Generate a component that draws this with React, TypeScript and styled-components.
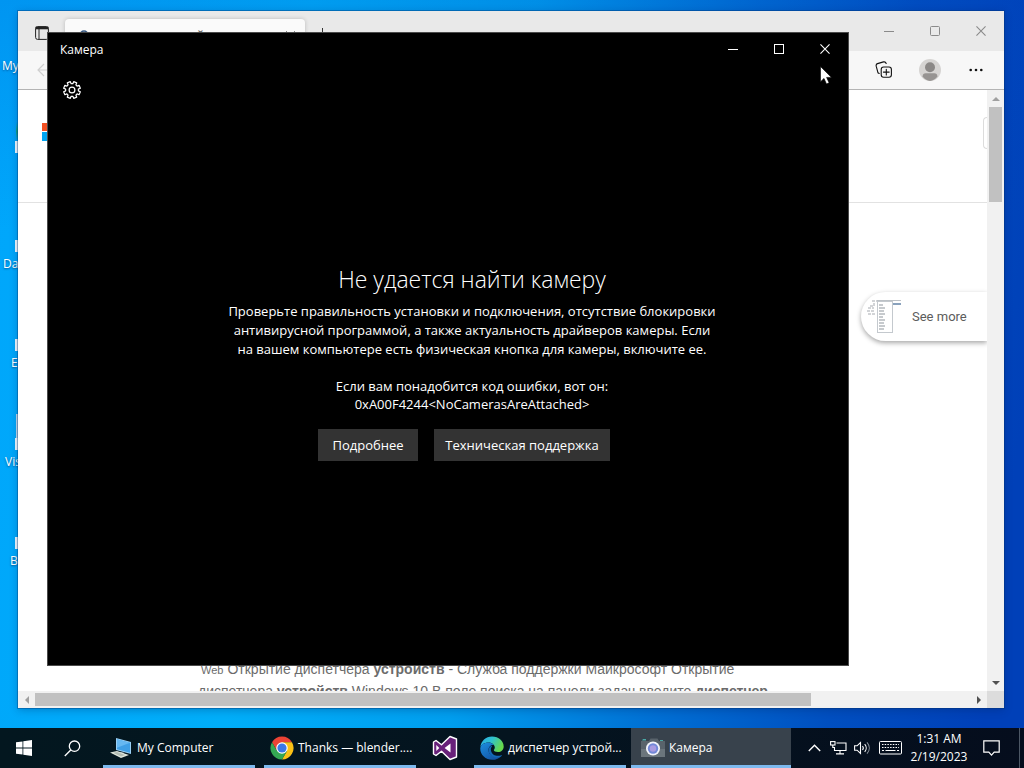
import React from "react";
import styled, { createGlobalStyle } from "styled-components";

const GlobalStyle = createGlobalStyle`
  * { box-sizing: border-box; }
  html, body { margin: 0; padding: 0; }
  body { font-family: "Open Sans", "Noto Sans", sans-serif; font-size: 12px; }
  button { font: inherit; color: inherit; border: 0; padding: 0; background: none; }
`;

/* ---------- desktop ---------- */

const Desktop = styled.div`
  min-height: 100vh;
  display: flex;
  flex-direction: column;
  overflow: hidden;
  background:
    linear-gradient(180deg, rgba(0, 60, 190, 0.16), rgba(0, 100, 220, 0) 30%),
    linear-gradient(97deg, #00a6fb 0%, #00aef9 28%, #009eee 48%, #006cd2 68%, #004fc0 82%, #0040b8 96%);
`;

const Workspace = styled.main`
  flex: 1;
  position: relative;
  display: flex;
`;

const Shortcuts = styled.ul`
  list-style: none;
  margin: 0;
  padding: 18px 0 0;
`;

const Shortcut = styled.li`
  height: 99px;
  display: flex;
  flex-direction: column;
`;

const ShortcutArt = styled.span<{ $color: string }>`
  width: 12px;
  height: 24px;
  margin-left: 16px;
  background: ${(p) => p.$color};
`;

const ShortcutBadge = styled.span<{ $shown: boolean }>`
  width: 12px;
  height: 12px;
  margin-left: 15px;
  margin-bottom: 4px;
  background: ${(p) => (p.$shown ? "#f4fbff" : "transparent")};
`;

const ShortcutLabel = styled.span<{ $indent: number }>`
  padding-left: ${(p) => p.$indent}px;
  line-height: 16px;
  color: #fff;
  text-shadow: 0 1px 2px rgba(0, 40, 90, 0.6);
`;

/* ---------- shared window parts ---------- */

const WindowButtons = styled.div`
  display: flex;
  margin-left: auto;
`;

const WindowButton = styled.button<{ $height: number }>`
  width: 46px;
  height: ${(p) => p.$height}px;
  display: flex;
  align-items: center;
  justify-content: center;
`;

/* ---------- browser ---------- */

const BrowserWindow = styled.section`
  position: absolute;
  inset: 11px 20px 20px 18px;
  display: flex;
  flex-direction: column;
  background: #fff;
  overflow: hidden;
  box-shadow: 0 0 0 1px rgba(0, 50, 110, 0.35), 0 2px 8px rgba(0, 30, 90, 0.3);
`;

const TabStrip = styled.header`
  height: 40px;
  display: flex;
  background: #e9e9e9;
  color: #8a8a8a;
`;

const TabMenu = styled.button`
  width: 47px;
  height: 40px;
  padding-top: 8px;
  color: #222;
`;

const Tab = styled.div`
  width: 240px;
  height: 32px;
  margin-top: 8px;
  padding: 0 10px 0 14px;
  display: flex;
  align-items: center;
  gap: 10px;
  border-radius: 4px 4px 0 0;
  background: #fafafa;
  color: #333;
  box-shadow: 0 0 4px rgba(0, 0, 0, 0.2);
  white-space: nowrap;
`;

const TabTitle = styled.span`
  flex: 1;
  overflow: hidden;
`;

const NewTab = styled.button`
  width: 34px;
  height: 32px;
  margin-top: 8px;
  color: #333;
`;

const AddressRow = styled.div`
  height: 39px;
  display: flex;
  align-items: center;
  padding-left: 18px;
  background: #f7f7f7;
  border-bottom: 1px solid #b4b4b4;
  color: #111;
`;

const ToolbarButton = styled.button`
  width: 46px;
  height: 38px;
  display: flex;
  align-items: center;
  justify-content: center;
`;

const ToolbarEnd = styled.div`
  display: flex;
  margin-left: auto;
  padding-right: 5px;
`;

const Viewport = styled.div`
  flex: 1;
  min-height: 0;
  display: flex;
`;

const Page = styled.div`
  flex: 1;
  min-width: 0;
  display: flex;
  flex-direction: column;
`;

const PageHeader = styled.div`
  height: 113px;
  display: flex;
  justify-content: space-between;
  padding: 27px 0 0 24px;
  border-bottom: 1px solid #e2e2e2;
`;

const MenuEdge = styled.span`
  width: 4px;
  height: 32px;
  border: 1px solid #dcdcdc;
  border-right: 0;
  border-radius: 4px 0 0 4px;
`;

const LogoBox = styled.span`
  padding-top: 6px;
`;

const Results = styled.div`
  flex: 1;
  min-height: 0;
  display: flex;
  flex-direction: column;
  justify-content: space-between;
  padding-top: 89px;
`;

const SeeMore = styled.a`
  align-self: flex-end;
  width: 126px;
  height: 49px;
  display: flex;
  align-items: center;
  gap: 10px;
  padding-left: 5px;
  border-radius: 25px 0 0 25px;
  background: #fff;
  box-shadow: 0 2px 5px rgba(0, 0, 0, 0.35);
  clip-path: inset(-8px 0 -10px -8px);
  color: #5c5c5c;
  font-family: Roboto, sans-serif;
  font-size: 13px;
  text-decoration: none;
`;

const Snippet = styled.p`
  margin: 0 0 0 180px;
  height: 32px;
  overflow: hidden;
  color: #6b6b6b;
  font-family: "Liberation Sans", sans-serif;
  font-size: 14px;
  line-height: 21px;
  white-space: nowrap;
`;

const SnippetTag = styled.span`
  padding: 0 4px 0 3px;
  font-size: 11px;
`;

const VerticalBar = styled.div`
  width: 17px;
  display: flex;
  flex-direction: column;
  align-items: center;
  background: #f1f1f1;
`;

const VerticalThumb = styled.div`
  width: 13px;
  height: 95px;
  background: #c1c1c1;
`;

const ScrollArrow = styled.button<{ $color: string }>`
  width: 17px;
  height: 17px;
  display: flex;
  align-items: center;
  justify-content: center;
  color: ${(p) => p.$color};
`;

const HorizontalBar = styled.div`
  height: 17px;
  display: flex;
  align-items: center;
  background: #f1f1f1;
`;

const HorizontalTrack = styled.div`
  flex: 1;
`;

const HorizontalThumb = styled.div`
  width: 83%;
  height: 13px;
  background: #c1c1c1;
`;

const ScrollCorner = styled.div`
  width: 17px;
  height: 17px;
  background: #dcdcdc;
`;

const PushDown = styled.div`
  margin-top: auto;
`;

/* ---------- camera ---------- */

const CameraWindow = styled.section`
  position: absolute;
  inset: 32px 175px 62px 47px;
  display: flex;
  flex-direction: column;
  border: 1px solid #4a4a4a;
  background: #000;
  color: #fff;
`;

const CameraTitleBar = styled.header`
  height: 32px;
  display: flex;
  padding-left: 12px;
  line-height: 34px;
`;

const CameraBody = styled.div`
  flex: 1;
  display: flex;
`;

const CameraRail = styled.nav`
  width: 48px;
`;

const RailButton = styled.button`
  width: 48px;
  height: 50px;
  display: flex;
  align-items: center;
  justify-content: center;
`;

const Message = styled.div`
  flex: 1;
  display: flex;
  flex-direction: column;
  align-items: center;
  justify-content: center;
  padding-bottom: 6px;
  text-align: center;
  font-size: 13px;
`;

const MessageTitle = styled.h1`
  margin: 0 0 7px;
  font-size: 23px;
  line-height: 32px;
  font-weight: 350;
`;

const MessageText = styled.p`
  margin: 0 0 18px;
  line-height: 19px;
`;

const ErrorText = styled.p`
  margin: 0 0 16px;
  line-height: 18px;
`;

const Actions = styled.div`
  display: flex;
`;

const ActionButton = styled.button<{ $width: number }>`
  width: ${(p) => p.$width}px;
  height: 32px;
  margin-right: 16px;
  background: #333;
  white-space: nowrap;
`;

const Pointer = styled.svg`
  position: absolute;
  top: 66px;
  right: 192px;
`;

/* ---------- taskbar ---------- */

const Taskbar = styled.footer`
  height: 40px;
  display: flex;
  background: linear-gradient(90deg, #03171f, #04141f 50%, #050d1d);
  color: #fff;
`;

const TaskIconButton = styled.button`
  width: 48px;
  height: 40px;
  display: flex;
  align-items: center;
  justify-content: center;
`;

const Tasks = styled.div`
  display: flex;
  gap: 1px;
  padding-left: 3px;
`;

const Task = styled.button<{ $active?: boolean }>`
  width: 160px;
  height: 40px;
  display: flex;
  flex-direction: column;
  padding: 0 ${(p) => (p.$active ? 0 : 4)}px;
  background: ${(p) => (p.$active ? "#38424c" : "transparent")};
`;

const TaskContent = styled.span<{ $active?: boolean }>`
  flex: 1;
  width: 100%;
  display: flex;
  align-items: center;
  gap: 4px;
  padding: 2px 0 0 ${(p) => (p.$active ? 10 : 6)}px;
  border-bottom: 3px solid #7db9ee;
  white-space: nowrap;
`;

const Tray = styled.div`
  display: flex;
  align-items: center;
  margin-left: auto;
  padding-right: 4px;
`;

const TrayButton = styled.button<{ $width: number }>`
  width: ${(p) => p.$width}px;
  height: 40px;
  display: flex;
  align-items: center;
  justify-content: center;
`;

const Clock = styled.button`
  width: 66px;
  height: 40px;
  line-height: 18px;
  text-align: center;
`;

const ShowDesktop = styled.span`
  width: 1px;
  height: 40px;
  margin-left: 8px;
  background: #4c5765;
`;

/* ---------- icons ---------- */

const MinimizeIcon = () => (
  <svg width="10" height="10" stroke="currentColor"><path d="M0 5.5h10" /></svg>
);
const MaximizeIcon = ({ radius = 0 }: { radius?: number }) => (
  <svg width="10" height="10" fill="none" stroke="currentColor">
    <rect x="0.5" y="0.5" width="9" height="9" rx={radius} />
  </svg>
);
const CloseIcon = ({ size = 10 }: { size?: number }) => (
  <svg width={size} height={size} viewBox="0 0 11 11" stroke="currentColor" strokeWidth="1.2"><path d="M.5.5l10 10M10.5.5l-10 10" /></svg>
);

const gearPath = (() => {
  const points: string[] = [];
  for (let i = 0; i < 8; i++) {
    const middle = 22.5 + i * 45;
    const corners: [number, number][] = [[-15, 6.4], [-11, 8.5], [11, 8.5], [15, 6.4]];
    corners.forEach(([offset, r]) => {
      const a = ((middle + offset) * Math.PI) / 180;
      points.push(`${(9 + r * Math.cos(a)).toFixed(2)} ${(9 + r * Math.sin(a)).toFixed(2)}`);
    });
  }
  return `M${points.join("L")}Z`;
})();

const GearIcon = () => (
  <svg width="18" height="18" viewBox="0 0 18 18" fill="none" stroke="#fff" strokeWidth="1.2" strokeLinejoin="round">
    <path d={gearPath} />
    <circle cx="9" cy="9" r="2.9" />
  </svg>
);

const TabMenuIcon = () => (
  <svg width="14" height="14" viewBox="0 0 14 14" fill="none" stroke="currentColor">
    <rect x="0.6" y="0.6" width="12.8" height="12.8" rx="2" />
    <path d="M.6 2h12.8" strokeWidth="2.6" />
    <path d="M4 3v10" />
  </svg>
);

const CollectionsIcon = () => (
  <svg width="18" height="18" viewBox="0 0 18 18" fill="none" stroke="currentColor" strokeWidth="1.1" strokeLinecap="round">
    <path d="M4.2 12.4 3 11.8 1.2 5.2C.9 3.8 1.2 3 2.5 2.6l6-1.7c1.4-.3 2.2.1 2.7 1.6" />
    <rect x="6.2" y="6" width="10.2" height="10.2" rx="2.4" />
    <path d="M11.3 8.200v5.800M8.400 11.100h5.800" />
  </svg>
);

const AvatarIcon = () => (
  <svg width="22" height="22" viewBox="0 0 22 22">
    <circle cx="11" cy="11" r="11" fill="#d6d4d2" />
    <circle cx="11" cy="8.2" r="5" fill="#8b8886" />
    <path d="M3.6 17.5c0-2 1.2-3.2 3-3.2h8.8c1.8 0 3 1.2 3 3.2A11 11 0 0 1 11 22a11 11 0 0 1-7.4-4.5z" fill="#979492" />
  </svg>
);

const MoreIcon = () => (
  <svg width="14" height="4" fill="currentColor">
    <circle cx="1.7" cy="2" r="1.3" /><circle cx="7" cy="2" r="1.3" /><circle cx="12.3" cy="2" r="1.3" />
  </svg>
);

const PageThumb = () => (
  <svg width="36" height="36" viewBox="0 0 36 36" fill="none" stroke="#8e959c">
    <rect x="11.5" y="2.5" width="15" height="31" stroke="#c4c9ce" />
    <path d="M6 2h5M8 4v3h-5M2 9h6M1 12h7M2 15h7" strokeDasharray="3 1" opacity=".8" />
    <path d="M13 6h4M13 9h6M13 12h5M13 15h6M13 18h4M13 21h6M13 24h5M13 27h6M13 30h5" />
    <path d="M11 1.5h24" stroke="#bcc1c6" />
    <path d="M27 5h8" stroke="#8aa2bd" strokeWidth="2" />
  </svg>
);

const MicrosoftLogo = () => (
  <svg width="19" height="18">
    <path fill="#f25022" d="M0 0h9v8H0z" /><path fill="#7fba00" d="M10 0h9v8h-9z" />
    <path fill="#00a4ef" d="M0 9h9v9H0z" /><path fill="#ffb900" d="M10 9h9v9h-9z" />
  </svg>
);

const Triangle = ({ d }: { d: string }) => (
  <svg width="8" height="8" fill="currentColor"><path d={d} /></svg>
);

const WindowsIcon = () => (
  <svg width="16" height="16" fill="#fff">
    <path d="M0 2.3l6.5-.9v6.2H0zM7.3 1.3L16 0v7.6H7.3zM0 8.4h6.5v6.2L0 13.7zM7.3 8.4H16V16l-8.7-1.3z" />
  </svg>
);

const SearchIcon = () => (
  <svg width="17" height="17" fill="none" stroke="#fff" strokeWidth="1.3">
    <circle cx="10.5" cy="6.2" r="5.2" /><path d="M6.8 10 .8 16" />
  </svg>
);

const ComputerIcon = () => (
  <svg width="24" height="24" viewBox="0 0 24 24">
    <path d="M7 2l15 4v12L7 14z" fill="#9bd0f5" />
    <path d="M8 3.3l13 3.5v10L8 13.2z" fill="#3f9fe6" />
    <path d="M8 3.3l13 3.5-13 5z" fill="#66b8f2" />
    <path d="M12 16l3 .8v2l-5-1z" fill="#8aa0ab" />
    <path d="M1 16.5l7-1.5 12 4-8 3z" fill="#dfe6dc" />
    <path d="M4 16.7l4-.7 8 2.9-4 1.5z" fill="#b3bdb4" />
  </svg>
);

const ChromeIcon = () => (
  <svg width="24" height="24" viewBox="0 0 24 24">
    <path d="M2.04 6.25A11.5 11.5 0 0 1 21.96 6.25H12V12L7.02 14.875Z" fill="#ea4335" />
    <path d="M21.96 6.25A11.5 11.5 0 0 1 12 23.5L16.98 14.875 12 12V6.25Z" fill="#fbc116" />
    <path d="M12 23.5A11.5 11.5 0 0 1 2.04 6.25L7.02 14.875 12 12 16.98 14.875Z" fill="#34a853" />
    <circle cx="12" cy="12" r="5.75" fill="#fff" />
    <circle cx="12" cy="12" r="4.6" fill="#3b78e7" />
  </svg>
);

const VisualStudioIcon = () => (
  <svg width="26" height="26" viewBox="0 0 26 26">
    <path d="M18 1.5L24.5 4v18L18 24.500l-8.500-8.300L4 20.500 1.500 19V7L4 5.500l5.500 4.300z" fill="#68217a" stroke="#fff" strokeWidth="1.400" strokeLinejoin="round" />
    <path d="M18.500 8.500v9L12.600 13zM4.300 10v6l3-3z" fill="#fff" />
  </svg>
);

const EdgeIcon = () => (
  <svg width="24" height="24" viewBox="0 0 24 24">
    <defs>
      <linearGradient id="edgeTop" x1="0" y1="0" x2="1" y2=".4">
        <stop offset="0" stopColor="#28a9e8" /><stop offset=".5" stopColor="#2fc2cf" /><stop offset="1" stopColor="#66d84c" />
      </linearGradient>
      <linearGradient id="edgeLow" x1="0" y1="0" x2=".8" y2="1">
        <stop offset="0" stopColor="#1c8fe0" /><stop offset="1" stopColor="#124f9f" />
      </linearGradient>
    </defs>
    <path d="M.3 11.5C.8 5 5.8.4 12 .4c6.8 0 11.7 4.8 11.7 10 0 3.4-2.5 5.7-5.7 5.7-2.6 0-4.2-1-4.2-2 0-.6 1-1 1-2.7 0-2.3-2.4-5-6.3-5C4.3 6.4.9 8.6.3 11.5z" fill="url(#edgeTop)" />
    <path d="M.3 12C.7 8.6 4 6.4 8.5 6.4c3 0 4.6 1.5 5.2 2.7-2.5-.8-5.2 1.7-5.2 4.9 0 3.7 3.3 6.9 7.9 6.9 2.3 0 4-.7 5.3-1.5-2.2 3-5.7 4.4-9.4 4.4C5.5 23.8-.2 18.5.3 12z" fill="url(#edgeLow)" />
    <path d="M8.6 13.5c-.5 4.2 3 7.9 7.8 7.9 2.4 0 4.2-.8 5.2-1.5.4-.3.3-.8-.2-.7-3.9 1.5-9.2.5-10.4-4.5-.4-1.7.2-3.6 1.4-4.9-2 .2-3.6 1.6-3.8 3.7z" fill="#1469b8" />
  </svg>
);

const CameraAppIcon = () => (
  <svg width="24" height="24" viewBox="0 0 24 24">
    <path d="M1 4.5h4V3H2zM19 4h3v1.5h-3z" fill="#4aa7a5" />
    <path d="M0 5h8l1.5-2.5h7L18 5h6v16H0z" fill="#59636b" />
    <path d="M0 13h24v8H0z" fill="#6b757c" />
    <circle cx="12" cy="12.5" r="7" fill="#f2f4fa" />
    <circle cx="12" cy="12.5" r="5.2" fill="#7388d8" />
    <circle cx="12" cy="12.5" r="3.2" fill="#a99be0" />
  </svg>
);

const ChevronIcon = () => (
  <svg width="13" height="8" fill="none" stroke="#fff" strokeWidth="1.4"><path d="M.8 7l5.7-5.7L12.2 7" /></svg>
);

const NetworkIcon = () => (
  <svg width="17" height="14" fill="none" stroke="#fff" strokeWidth="1.1">
    <path d="M6.5 2H16v7.5H4.5V6M10 9.5V13M6 12.9h8" />
    <rect x=".6" y=".6" width="4.4" height="3.4" /><path d="M2.8 4v2.5H4.5" />
  </svg>
);

const SoundIcon = () => (
  <svg width="17" height="14" fill="none" stroke="#fff" strokeWidth="1.1">
    <path d="M.6 4.8h2.5L6.5 1.5v11L3.1 9.2H.6z" />
    <path d="M8.5 5c1 1.2 1 2.8 0 4M10.7 3.2c2 2.2 2 5.4 0 7.6" />
    <path d="M13 1.3c3 3.4 3 8 0 11.4" stroke="#8a929c" />
  </svg>
);

const KeyboardIcon = () => (
  <svg width="23" height="14" fill="none" stroke="#fff">
    <rect x=".5" y=".5" width="22" height="12.5" rx="1" />
    <path d="M3 3.5h17M3 6.5h17" strokeDasharray="1.5 1.2" />
    <path d="M3 9.5h2M6.5 9.5h10M18 9.5h2" />
  </svg>
);

const NotificationIcon = () => (
  <svg width="17" height="17" fill="none" stroke="#fff" strokeWidth="1.2">
    <path d="M.8.8h15.4v11.4h-5l-2.7 3-2.7-3h-5z" />
  </svg>
);

/* ---------- page ---------- */

const shortcuts = [
  { label: "My", indent: 2, badge: false, art: "transparent" },
  { label: "", indent: 0, badge: true, art: "linear-gradient(transparent 20%, #12a07c 60%, transparent)" },
  { label: "Da", indent: 3, badge: true, art: "transparent" },
  { label: "E", indent: 11, badge: true, art: "transparent" },
  { label: "Vis", indent: 5, badge: true, art: "#c4dcec" },
  { label: "B", indent: 10, badge: true, art: "transparent" },
];

export default function App() {
  return (
    <>
      <GlobalStyle />
      <Desktop>
        <Workspace>
          <Shortcuts>
            {shortcuts.map((s, i) => (
              <Shortcut key={i}>
                <ShortcutArt $color={s.art} />
                <ShortcutBadge $shown={s.badge} />
                <ShortcutLabel $indent={s.indent}>{s.label}</ShortcutLabel>
              </Shortcut>
            ))}
          </Shortcuts>

          <BrowserWindow>
            <TabStrip>
              <TabMenu aria-label="Tab actions"><TabMenuIcon /></TabMenu>
              <Tab>
                <svg width="11" height="11" fill="none" stroke="#33557f" strokeWidth="1.5"><circle cx="5" cy="5" r="4" /></svg>
                <TabTitle>диспетчер устройств</TabTitle>
                <CloseIcon size={9} />
              </Tab>
              <NewTab aria-label="New tab">
                <svg width="12" height="12" stroke="currentColor"><path d="M6.5 0v12M0 6.5h12" /></svg>
              </NewTab>
              <WindowButtons>
                <WindowButton $height={40} aria-label="Minimize"><MinimizeIcon /></WindowButton>
                <WindowButton $height={40} aria-label="Maximize"><MaximizeIcon radius={1} /></WindowButton>
                <WindowButton $height={40} aria-label="Close"><CloseIcon /></WindowButton>
              </WindowButtons>
            </TabStrip>
            <AddressRow>
              <svg width="16" height="14" fill="none" stroke="#cfcfcf" strokeWidth="1.2"><path d="M8 1L2 7l6 6M2 7h13" /></svg>
              <ToolbarEnd>
                <ToolbarButton aria-label="Collections"><CollectionsIcon /></ToolbarButton>
                <ToolbarButton aria-label="Profile"><AvatarIcon /></ToolbarButton>
                <ToolbarButton aria-label="Settings and more"><MoreIcon /></ToolbarButton>
              </ToolbarEnd>
            </AddressRow>
            <Viewport>
              <Page>
                <PageHeader>
                  <LogoBox><MicrosoftLogo /></LogoBox>
                  <MenuEdge />
                </PageHeader>
                <Results>
                  <SeeMore href="#more"><PageThumb />See more</SeeMore>
                  <Snippet>
                    <SnippetTag>Web</SnippetTag>
                    Открытие диспетчера <b>устройств</b> - Служба поддержки Майкрософт Открытие
                    <br />
                    диспетчера <b>устройств</b> Windows 10 В поле поиска на панели задач введите <b>диспетчер</b>
                  </Snippet>
                </Results>
              </Page>
              <VerticalBar>
                <ScrollArrow $color="#a0a0a0" aria-label="Scroll up"><Triangle d="M0 6h8L4 2z" /></ScrollArrow>
                <VerticalThumb />
                <PushDown>
                  <ScrollArrow $color="#505050" aria-label="Scroll down"><Triangle d="M0 2h8L4 6z" /></ScrollArrow>
                </PushDown>
              </VerticalBar>
            </Viewport>
            <HorizontalBar>
              <ScrollArrow $color="#a0a0a0" aria-label="Scroll left"><Triangle d="M6 0v8L2 4z" /></ScrollArrow>
              <HorizontalTrack><HorizontalThumb /></HorizontalTrack>
              <ScrollArrow $color="#505050" aria-label="Scroll right"><Triangle d="M2 0v8l4-4z" /></ScrollArrow>
              <ScrollCorner />
            </HorizontalBar>
          </BrowserWindow>

          <CameraWindow>
            <CameraTitleBar>
              Камера
              <WindowButtons>
                <WindowButton $height={32} aria-label="Свернуть"><MinimizeIcon /></WindowButton>
                <WindowButton $height={32} aria-label="Развернуть"><MaximizeIcon /></WindowButton>
                <WindowButton $height={32} aria-label="Закрыть"><CloseIcon /></WindowButton>
              </WindowButtons>
            </CameraTitleBar>
            <CameraBody>
              <CameraRail><RailButton aria-label="Параметры"><GearIcon /></RailButton></CameraRail>
              <Message>
                <MessageTitle>Не удается найти камеру</MessageTitle>
                <MessageText>
                  Проверьте правильность установки и подключения, отсутствие блокировки
                  <br />
                  антивирусной программой, а также актуальность драйверов камеры. Если
                  <br />
                  на вашем компьютере есть физическая кнопка для камеры, включите ее.
                </MessageText>
                <ErrorText>
                  Если вам понадобится код ошибки, вот он:
                  <br />
                  0xA00F4244&lt;NoCamerasAreAttached&gt;
                </ErrorText>
                <Actions>
                  <ActionButton $width={100}>Подробнее</ActionButton>
                  <ActionButton $width={176}>Техническая поддержка</ActionButton>
                </Actions>
              </Message>
            </CameraBody>
          </CameraWindow>

          <Pointer width="12" height="19" viewBox="0 0 12 19">
            <path d="M.5.5v15.2l3.5-3.3 2.5 5.6 2.6-1.2-2.5-5.4h4.900z" fill="#fff" stroke="#000" strokeWidth=".6" />
          </Pointer>
        </Workspace>

        <Taskbar>
          <TaskIconButton aria-label="Start"><WindowsIcon /></TaskIconButton>
          <TaskIconButton aria-label="Search"><SearchIcon /></TaskIconButton>
          <Tasks>
            <Task><TaskContent><ComputerIcon />My Computer</TaskContent></Task>
            <Task><TaskContent><ChromeIcon />Thanks — blender....</TaskContent></Task>
            <TaskIconButton aria-label="Visual Studio"><VisualStudioIcon /></TaskIconButton>
            <Task><TaskContent><EdgeIcon />диспетчер устрой...</TaskContent></Task>
            <Task $active><TaskContent $active><CameraAppIcon />Камера</TaskContent></Task>
          </Tasks>
          <Tray>
            <TrayButton $width={24} aria-label="Show hidden icons"><ChevronIcon /></TrayButton>
            <TrayButton $width={24} aria-label="Network"><NetworkIcon /></TrayButton>
            <TrayButton $width={24} aria-label="Volume"><SoundIcon /></TrayButton>
            <TrayButton $width={32} aria-label="Keyboard"><KeyboardIcon /></TrayButton>
            <Clock>1:31 AM<br />2/19/2023</Clock>
            <TrayButton $width={39} aria-label="Notifications"><NotificationIcon /></TrayButton>
            <ShowDesktop />
          </Tray>
        </Taskbar>
      </Desktop>
    </>
  );
}
